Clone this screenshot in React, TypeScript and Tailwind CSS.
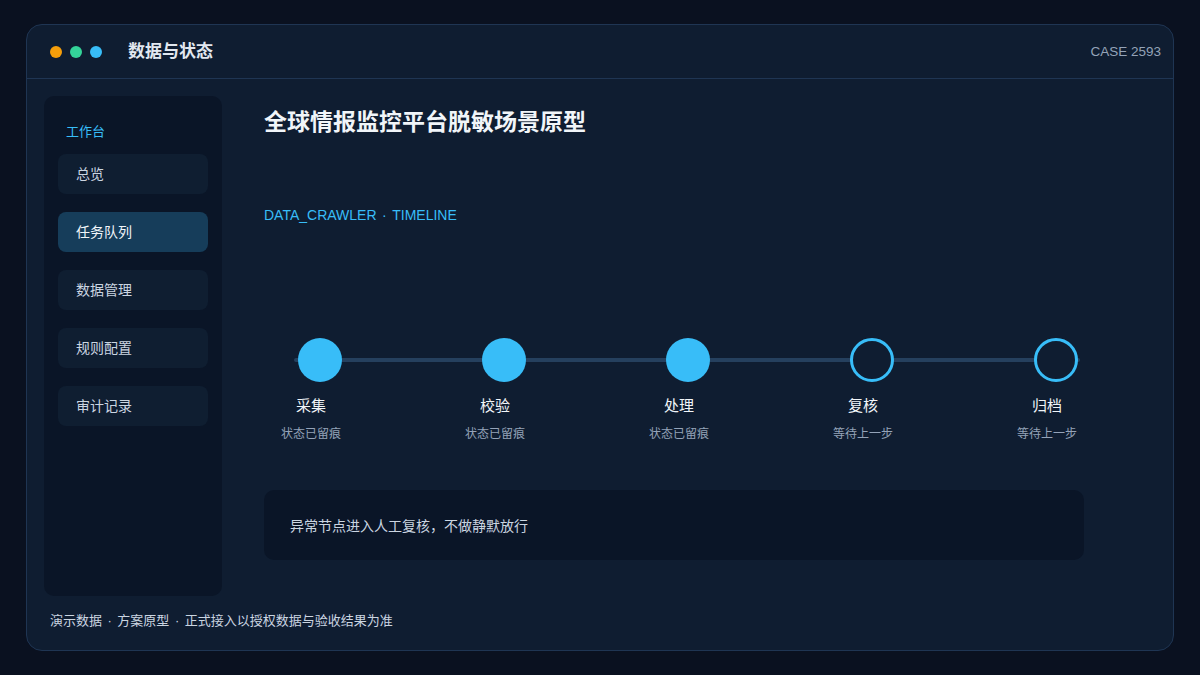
import type React from 'react';

const navItems = ['总览', '任务队列', '数据管理', '规则配置', '审计记录'];

const steps = [
	{ name: '采集', note: '状态已留痕', done: true },
	{ name: '校验', note: '状态已留痕', done: true },
	{ name: '处理', note: '状态已留痕', done: true },
	{ name: '复核', note: '等待上一步', done: false },
	{ name: '归档', note: '等待上一步', done: false },
];

const Dot: React.FC = () => <span className="mx-[5.5px]">·</span>;

const App: React.FC = () => {
	return (
		<div
			className="flex h-[675px] w-[1200px] bg-[#0a1120] px-[26px] pt-[24px] pb-[24px]"
			style={{ fontFamily: '"Liberation Sans", "Noto Sans CJK SC", sans-serif' }}
		>
			<div className="flex flex-1 flex-col rounded-[16px] border border-[#1f3553] bg-[#0f1d31]">
				{/* Header */}
				<div className="flex h-[54px] items-center border-b border-[#1f3553] pt-[1px] pr-[12px] pl-[23px]">
					<div className="flex items-center gap-[8px]">
						<span className="h-[12px] w-[12px] rounded-full bg-[#f59e0b]" />
						<span className="h-[12px] w-[12px] rounded-full bg-[#34d399]" />
						<span className="h-[12px] w-[12px] rounded-full bg-[#38bdf8]" />
					</div>
					<div className="ml-[26px] text-[17px] font-bold text-[#e2e8f0]">数据与状态</div>
					<div className="ml-auto text-[13.5px] text-[#94a3b8]">CASE 2593</div>
				</div>

				<div className="flex flex-1 pt-[17px] pl-[17px]">
					{/* Sidebar */}
					<div className="flex h-[500px] w-[178px] flex-col rounded-[10px] bg-[#0a1527] px-[14px] pt-[27px]">
						<div className="pl-[8px] text-[13px] leading-[18px] text-[#38bdf8]">工作台</div>
						<div className="mt-[13px] flex flex-col gap-[18px]">
							{navItems.map((item, i) => (
								<div
									key={item}
									className={`flex h-[40px] items-center rounded-[8px] pl-[18px] text-[14px] ${
										i === 1 ? 'bg-[#163d5a] text-[#f1f5f9]' : 'bg-[#0f1e31] text-[#cbd5e1]'
									}`}
								>
									{item}
								</div>
							))}
						</div>
					</div>

					{/* Main */}
					<div className="ml-[42px] flex w-[820px] flex-col">
						<div className="mt-[11px] text-[23px] leading-[30px] font-bold text-[#f1f5f9]">
							全球情报监控平台脱敏场景原型
						</div>
						<div className="mt-[68px] text-[14px] leading-[20px] text-[#38bdf8]">
							DATA_CRAWLER
							<Dot />
							TIMELINE
						</div>

						{/* Timeline */}
						<div className="relative mt-[113px] h-[110px]">
							<div className="absolute top-[20px] left-[30px] h-[4px] w-[786px] rounded-full bg-[#25405e]" />
							<div className="relative flex gap-[72px]">
								{steps.map((s) => (
									<div key={s.name} className="flex w-[112px] shrink-0 flex-col items-center">
										<div
											className={`h-[44px] w-[44px] rounded-full ${
												s.done
													? 'bg-[#38bdf8]'
													: 'border-[3px] border-[#38bdf8] bg-[#0f1d31]'
											}`}
										/>
										<div className="mr-[18px] flex flex-col items-center">
											<div className="mt-[13px] text-[15px] leading-[22px] text-[#f1f5f9]">{s.name}</div>
											<div className="mt-[9px] text-[12px] leading-[16px] text-[#94a3b8]">{s.note}</div>
										</div>
									</div>
								))}
							</div>
						</div>

						<div className="mt-[42px] flex h-[70px] items-center rounded-[10px] bg-[#0a1527] pt-[2px] pl-[26px] text-[14px] text-[#cbd5e1]">
							异常节点进入人工复核，不做静默放行
						</div>
					</div>
				</div>

				<div className="pb-[20px] pl-[23px] text-[13px] leading-[18px] text-[#cbd5e1]">
					演示数据
					<Dot />
					方案原型
					<Dot />
					正式接入以授权数据与验收结果为准
				</div>
			</div>
		</div>
	);
};

export default App;
